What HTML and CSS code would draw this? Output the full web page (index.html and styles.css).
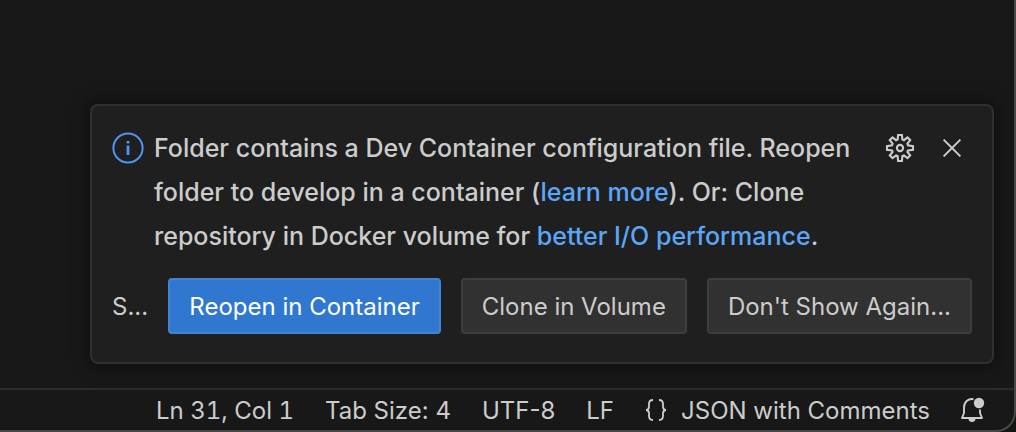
FILE: index.html
```html
<!DOCTYPE html>
<html lang="en">
<head>
<meta charset="utf-8">
<title>Editor</title>
<link rel="stylesheet" href="styles.css">
</head>
<body>
<div class="window">
  <main class="editor">
    <section class="toast" role="alert">
      <div class="toast-main">
        <svg class="info-icon" viewBox="0 0 32 32" fill="none" aria-hidden="true">
          <circle cx="16" cy="16" r="14.6" stroke="currentColor" stroke-width="2"/>
          <path d="M16 13.500v9.500M16 9v2.400" stroke="currentColor" stroke-width="2.800"/>
        </svg>
        <p class="message">Folder contains a Dev Container configuration file. Reopen folder to develop in a container (<a href="#learn">learn more</a>). Or: Clone repository in Docker volume for <a href="#performance">better I/O performance</a>.</p>
        <div class="toolbar">
          <button class="icon-button" type="button" aria-label="Configure notification">
            <svg viewBox="0 0 32 32" fill="none" stroke="currentColor" stroke-width="2.100" aria-hidden="true">
              <path d="M13.600 7.600 14.100 3h3.800l.5 4.600 1.500.6 3.600-2.800 2.700 2.700-2.800 3.600.6 1.500 5 .9v3.800l-5 .5-.6 1.500 2.800 3.600-2.700 2.700-3.600-2.800-1.500.6-.5 5h-3.800l-.5-5-1.500-.6-3.600 2.800-2.700-2.700 2.800-3.600-.6-1.500-5-.5v-3.800l5-.9.6-1.500-2.800-3.600 2.700-2.700 3.600 2.800z"/>
              <circle cx="16" cy="16" r="3.100"/>
            </svg>
          </button>
          <button class="icon-button" type="button" aria-label="Clear notification">
            <svg viewBox="0 0 32 32" fill="none" stroke="currentColor" stroke-width="2" aria-hidden="true">
              <path d="m7.600 7.600 16.800 16.800M24.400 7.600 7.600 24.400"/>
            </svg>
          </button>
        </div>
      </div>
      <div class="toast-actions">
        <span class="source">S...</span>
        <button class="button primary" type="button">Reopen in Container</button>
        <button class="button" type="button">Clone in Volume</button>
        <button class="button" type="button">Don't Show Again...</button>
      </div>
    </section>
  </main>
  <footer class="statusbar">
    <button class="status-item position" type="button">Ln 31, Col 1</button>
    <button class="status-item" type="button">Tab Size: 4</button>
    <button class="status-item" type="button">UTF-8</button>
    <button class="status-item" type="button">LF</button>
    <button class="status-item" type="button">
      <svg class="brace-icon" viewBox="0 0 22 24" fill="none" stroke="currentColor" stroke-width="1.800" aria-hidden="true">
        <path d="M8 2C5 2 4 3 4 6v2.500C4 10.800 3.200 12 1 12c2.200 0 3 1.200 3 3.500V18c0 3 1 4 4 4"/>
        <path d="M14 2c3 0 4 1 4 4v2.500c0 2.300.8 3.500 3 3.500-2.200 0-3 1.200-3 3.500V18c0 3-1 4-4 4"/>
      </svg>
      <span>JSON with Comments</span>
    </button>
    <button class="status-item bell" type="button" aria-label="Notifications">
      <svg class="bell-icon" viewBox="0 0 28 28" fill="none" aria-hidden="true">
        <path d="M15.500 3.200C10 2.200 6 6.200 6 11.500V17l-2 5h20l-2-5v-3.500" stroke="currentColor" stroke-width="1.900" stroke-linejoin="round"/>
        <path d="M10.500 22.500h7a3.500 3.500 0 0 1-7 0z" fill="currentColor"/>
        <circle cx="21" cy="7" r="5.200" fill="currentColor"/>
      </svg>
    </button>
  </footer>
</div>
</body>
</html>
```
FILE: styles.css
```css
* {
  box-sizing: border-box;
}

body {
  margin: 0;
  background: #111611;
  color: #cccccc;
  font-family: Inter, "Liberation Sans", sans-serif;
  font-size: 24px;
}

button {
  margin: 0;
  border: 0;
  background: none;
  color: inherit;
  font: inherit;
  white-space: nowrap;
}

.window {
  display: flex;
  flex-direction: column;
  min-height: 100vh;
  overflow: hidden;
  background: #181818;
  border: solid #484848;
  border-width: 0 2px 2px 0;
  border-bottom-right-radius: 20px;
}

.editor {
  display: flex;
  flex: 1;
  flex-direction: column;
  justify-content: flex-end;
  padding: 24px 20px 24px 90px;
}

.toast {
  display: flex;
  flex-direction: column;
  gap: 20px;
  padding: 20px 20px 28px;
  background: #1f1f1f;
  border: 2px solid #303030;
  border-radius: 8px;
  box-shadow: 0 0 16px 4px rgba(0, 0, 0, 0.36);
}

.toast-main {
  display: flex;
  align-items: flex-start;
}

.info-icon {
  flex: none;
  width: 32px;
  height: 44px;
  margin-right: 10px;
  color: #5094f6;
}

.message {
  flex: 1;
  margin: 0;
  font-size: 25px;
  font-weight: 500;
  line-height: 44px;
}

.message a {
  color: #5ca6f8;
  text-decoration: none;
}

.toolbar {
  display: flex;
  gap: 20px;
  margin-right: 4px;
}

.icon-button {
  display: flex;
  align-items: center;
  width: 32px;
  height: 44px;
  padding: 0;
}

.icon-button svg {
  width: 32px;
  height: 32px;
}

.toast-actions {
  display: flex;
  align-items: center;
  gap: 20px;
}

.source {
  flex: 1;
  min-width: 0;
  white-space: nowrap;
}

.button {
  height: 56px;
  padding: 0 19px;
  background: #313131;
  border: 2px solid #3e3e3e;
  border-radius: 4px;
}

.button.primary {
  background: #3078cf;
  border-color: #4283d2;
  color: #ffffff;
}

.statusbar {
  display: flex;
  align-items: center;
  justify-content: flex-end;
  gap: 31px;
  height: 42px;
  padding-right: 28px;
  border-top: 2px solid #2b2b2b;
}

.status-item {
  display: flex;
  align-items: center;
  gap: 14px;
  padding: 0;
}

.position {
  font-variant-numeric: tabular-nums;
}

.bell {
  margin-left: -3px;
}

.brace-icon {
  width: 22px;
  height: 24px;
}

.bell-icon {
  width: 28px;
  height: 28px;
}
```
